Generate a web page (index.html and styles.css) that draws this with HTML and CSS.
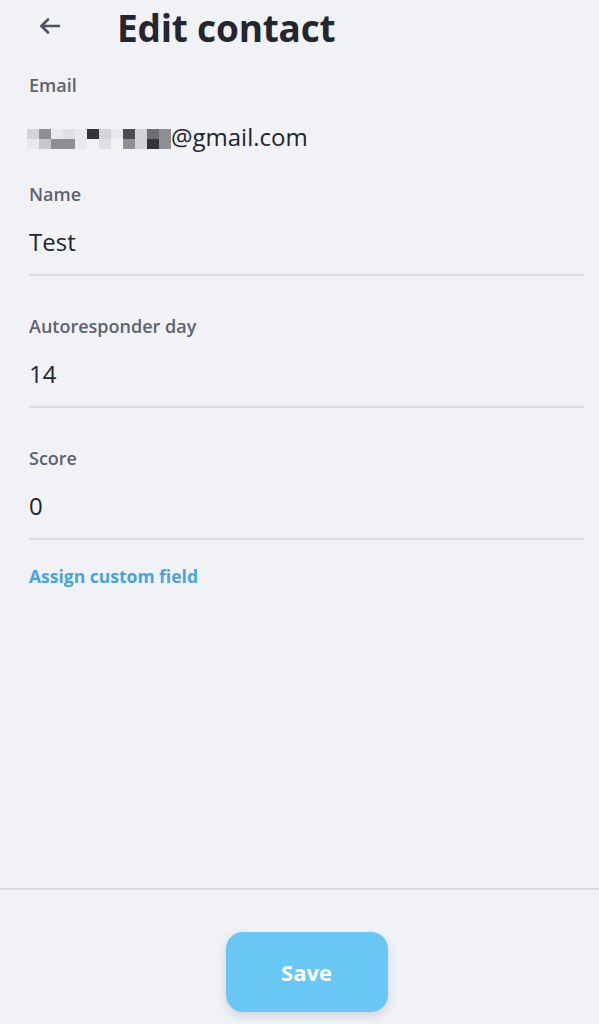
FILE: index.html
```html
<!DOCTYPE html>
<html lang="en">
  <head>
    <meta charset="UTF-8" />
    <meta name="viewport" content="width=device-width, initial-scale=1.0" />
    <title>Edit contact</title>
    <link rel="stylesheet" href="styles.css">
  </head>
  <body>
    <div class="page">
      <header class="top-bar">
        <button class="back-btn" aria-label="Back">
          <svg width="22" height="22" viewBox="0 0 22 22" fill="none" stroke="#4b5262" stroke-width="2.6" stroke-linecap="round" stroke-linejoin="round">
            <path d="M20 11H2.5" />
            <path d="M9 17.5L2.5 11 9 4.5" />
          </svg>
        </button>
        <h1>Edit contact</h1>
      </header>

      <main class="form">
        <div class="field field-static">
          <div class="field-label">Email</div>
          <div class="field-value email">
            <span class="blur">
              <span class="s3"></span><span class="s6"></span><span class="s1"></span><span class="s2"></span><span class="s1"></span><span class="s9"></span><span class="s3"></span><span class="s1"></span><span class="s8"></span><span class="s3"></span><span class="s7"></span><span class="s6"></span>
              <span class="s1"></span><span class="s4"></span><span class="s6"></span><span class="s6"></span><span class="s1"></span><span class="s0"></span><span class="s2"></span><span class="s0"></span><span class="s6"></span><span class="s3"></span><span class="s9"></span><span class="s6"></span>
            </span>@gmail.com
          </div>
        </div>

        <div class="field">
          <div class="field-label">Name</div>
          <div class="field-value">Test</div>
        </div>

        <div class="field">
          <div class="field-label">Autoresponder day</div>
          <div class="field-value">14</div>
        </div>

        <div class="field">
          <div class="field-label">Score</div>
          <div class="field-value">0</div>
        </div>

        <a class="custom-link" href="#">Assign custom field</a>
      </main>

      <footer class="footer">
        <button class="save-btn">Save</button>
      </footer>
    </div>
  </body>
</html>
```

FILE: styles.css
```css
html,
body {
  margin: 0;
  padding: 0;
  background-color: #f1f2f6;
}
body {
  font-family: "Open Sans", "Noto Sans", sans-serif;
  color: #22252b;
}
.page {
  height: 1024px;
  display: flex;
  flex-direction: column;
}
.top-bar {
  display: flex;
  align-items: center;
  height: 54px;
  padding-left: 39px;
}
.back-btn {
  border: none;
  background: none;
  padding: 0;
  width: 22px;
  height: 22px;
  display: flex;
  margin-top: -3px;
  margin-right: 56px;
}
.top-bar h1 {
  margin: 0;
  font-size: 37px;
  font-weight: 700;
  color: #23262d;
  letter-spacing: -0.2px;
}
.form {
  flex: 1;
  padding: 19px 15px 0 29px;
}
.field {
  border-bottom: 2px solid #dcdde2;
  padding-bottom: 16px;
  margin-bottom: 38px;
}
.field-static {
  border-bottom: none;
  padding-bottom: 0;
  margin-bottom: 29px;
}
.field-label {
  font-size: 18px;
  font-weight: 600;
  color: #5d6271;
  line-height: 24px;
}
.field-value {
  margin-top: 20px;
  font-size: 24px;
  line-height: 32px;
  color: #22252b;
}
.field-static .field-value {
  margin-top: 24px;
}
.email {
  display: flex;
  align-items: center;
  margin-left: -2px;
}
.blur {
  display: grid;
  grid-template-columns: repeat(12, 12px);
  grid-auto-rows: 10px;
  margin-top: 4px;
}
.s0 { background: #f1f2f6; }
.s1 { background: #e8e9ed; }
.s2 { background: #dfe0e4; }
.s3 { background: #d3d4d8; }
.s4 { background: #c6c7cb; }
.s6 { background: #8e8f94; }
.s7 { background: #6d6e73; }
.s8 { background: #4b4c51; }
.s9 { background: #34353a; }
.custom-link {
  display: block;
  width: max-content;
  margin-top: -14px;
  font-size: 17.5px;
  line-height: 24px;
  font-weight: 700;
  color: #47a4e1;
  text-decoration: none;
}
.footer {
  border-top: 2px solid #d9dadf;
  height: 134px;
  display: flex;
  justify-content: center;
  align-items: flex-start;
}
.save-btn {
  margin-top: 42px;
  margin-left: 14px;
  width: 162px;
  height: 80px;
  border: none;
  border-radius: 17px;
  background-color: #68c7f5;
  color: #ffffff;
  font-family: "Open Sans", "Noto Sans", sans-serif;
  font-size: 22px;
  font-weight: 700;
  box-shadow: 0 4px 10px rgba(60, 70, 90, 0.18);
}
```
